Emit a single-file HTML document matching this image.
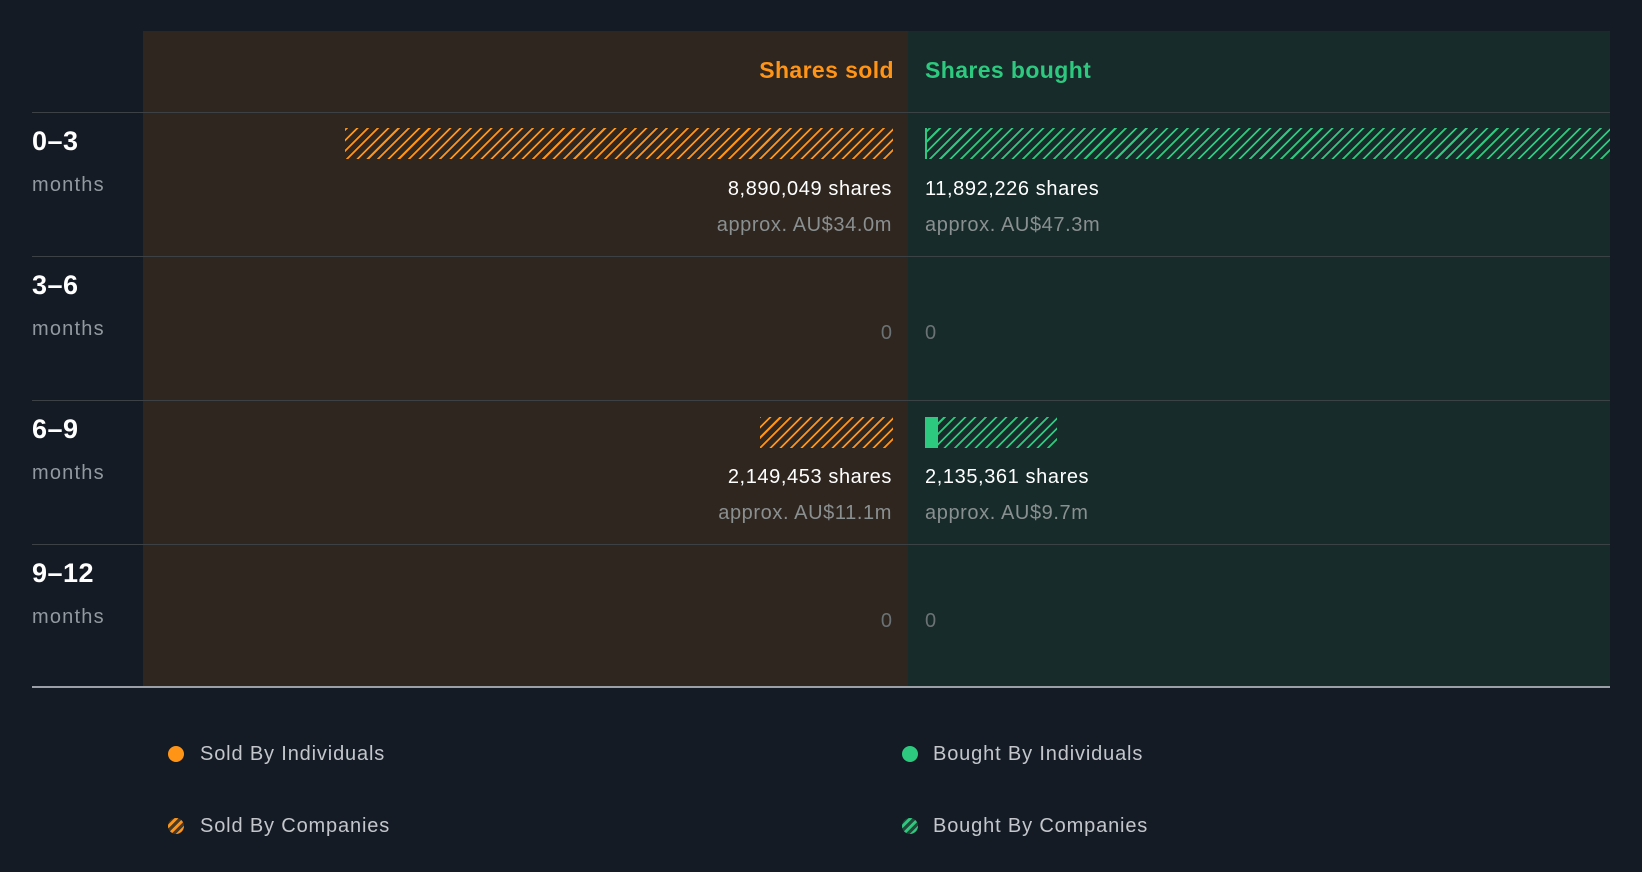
<!DOCTYPE html>
<html><head><style>
*{margin:0;padding:0;box-sizing:border-box}
body{width:1642px;height:872px;background:#151b24;font-family:"Liberation Sans",sans-serif;position:relative;overflow:hidden}
.a{position:absolute;white-space:nowrap}
.sold{background:#2f2620}.bought{background:#172b2a}
.line{position:absolute;left:32px;width:1578px;height:1px;background:#3c4146}
.hs{background:repeating-linear-gradient(-45deg,transparent 0 5.5px,#ff9416 5.5px 7.3px)}
.hb{background:repeating-linear-gradient(-45deg,transparent 0 5.5px,#2dc97e 5.5px 7.3px)}
.lab{font-weight:bold;font-size:27px;color:#fff;left:32px;letter-spacing:0.5px}
.mon{font-size:20px;color:#9299a0;left:32px;letter-spacing:1.2px}
.n{font-size:20px;color:#fff;letter-spacing:0.6px}
.ap{font-size:20px;color:#8a8f90;letter-spacing:0.6px}
.z{font-size:20px;color:#6b7275}
.r{right:750px;text-align:right}
.g{left:925px}
.leg{font-size:20px;color:#c3c7cc;letter-spacing:0.85px}
</style></head><body>
<div class="a sold" style="left:143px;top:31px;width:765px;height:656px"></div>
<div class="a bought" style="left:908px;top:31px;width:702px;height:656px"></div>
<div class="a" style="right:748px;top:57px;font-size:23px;font-weight:bold;color:#ff9416;letter-spacing:0.4px">Shares sold</div>
<div class="a" style="left:925px;top:57px;font-size:23px;font-weight:bold;color:#2dc97e;letter-spacing:0.4px">Shares bought</div>
<div class="line" style="top:112px"></div>
<div class="line" style="top:256px"></div>
<div class="line" style="top:400px"></div>
<div class="line" style="top:544px"></div>
<div class="line" style="top:686px;height:2px;background:#9aa0a6"></div>

<div class="a lab" style="top:126px">0–3</div><div class="a mon" style="top:174px">months</div>
<div class="a lab" style="top:270px">3–6</div><div class="a mon" style="top:318px">months</div>
<div class="a lab" style="top:414px">6–9</div><div class="a mon" style="top:462px">months</div>
<div class="a lab" style="top:558px">9–12</div><div class="a mon" style="top:606px">months</div>

<div class="a hs" style="left:345px;top:128px;width:548px;height:31px"></div>
<div class="a hb" style="left:925px;top:128px;width:685px;height:31px;border-left:2px solid #2dc97e"></div>
<div class="a n r" style="top:178px">8,890,049 shares</div>
<div class="a n g" style="top:178px">11,892,226 shares</div>
<div class="a ap r" style="top:214px">approx. AU$34.0m</div>
<div class="a ap g" style="top:214px">approx. AU$47.3m</div>

<div class="a z r" style="top:322px">0</div><div class="a z g" style="top:322px">0</div>

<div class="a hs" style="left:760px;top:417px;width:133px;height:31px"></div>
<div class="a" style="left:925px;top:417px;width:13px;height:31px;background:#2dc97e"></div>
<div class="a hb" style="left:938px;top:417px;width:119px;height:31px"></div>
<div class="a n r" style="top:466px">2,149,453 shares</div>
<div class="a n g" style="top:466px">2,135,361 shares</div>
<div class="a ap r" style="top:502px">approx. AU$11.1m</div>
<div class="a ap g" style="top:502px">approx. AU$9.7m</div>

<div class="a z r" style="top:610px">0</div><div class="a z g" style="top:610px">0</div>

<div class="a" style="left:168px;top:746px;width:16px;height:16px;border-radius:50%;background:#ff9416"></div>
<div class="a leg" style="left:200px;top:743px">Sold By Individuals</div>
<div class="a" style="left:168px;top:818px;width:16px;height:16px;border-radius:50%;background:repeating-linear-gradient(-45deg,#4a3a24 0 3px,#ff9416 3px 6px)"></div>
<div class="a leg" style="left:200px;top:815px">Sold By Companies</div>
<div class="a" style="left:902px;top:746px;width:16px;height:16px;border-radius:50%;background:#2dc97e"></div>
<div class="a leg" style="left:933px;top:743px">Bought By Individuals</div>
<div class="a" style="left:902px;top:818px;width:16px;height:16px;border-radius:50%;background:repeating-linear-gradient(-45deg,#1f4a3a 0 3px,#2dc97e 3px 6px)"></div>
<div class="a leg" style="left:933px;top:815px">Bought By Companies</div>
</body></html>
